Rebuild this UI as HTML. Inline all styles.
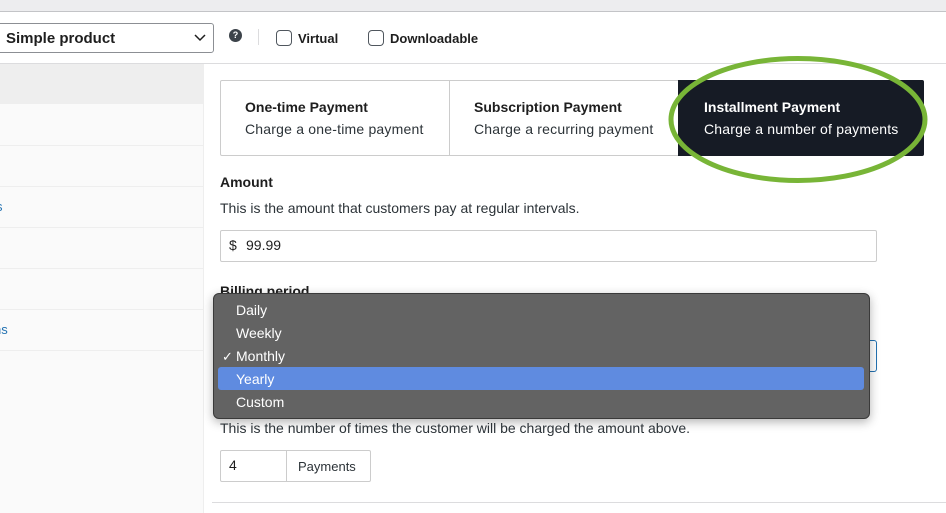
<!DOCTYPE html>
<html><head><style>
*{box-sizing:border-box;margin:0;padding:0}
body{width:946px;height:513px;overflow:hidden;background:#fff;font-family:"Liberation Sans",sans-serif;color:#1e1e1e;position:relative}
.a{position:absolute}
.t{font-size:14px;color:#2c3338}
</style></head><body>
<div class="a" style="left:0;top:0;width:946px;height:12px;background:#ededef;border-bottom:1px solid #c3c4c7"></div>
<div class="a" style="left:0;top:63px;width:946px;height:1px;background:#dcdcde"></div>
<div class="a" style="left:-4px;top:23px;width:218px;height:30px;border:1px solid #8c8f94;border-radius:3px"></div>
<div class="a" style="left:6px;top:30px;font-size:15px;font-weight:bold;color:#1e1e1e">Simple product</div>
<svg class="a" style="left:194px;top:33px" width="12" height="10"><path d="M1 2 L6 7 L11 2" stroke="#1e1e1e" stroke-width="1.5" fill="none"/></svg>
<div class="a" style="left:229px;top:29px;width:13px;height:13px;border-radius:50%;background:#3c434a;color:#fff;font-size:9px;font-weight:bold;text-align:center;line-height:13px">?</div>
<div class="a" style="left:258px;top:29px;width:1px;height:16px;background:#dcdcde"></div>
<div class="a" style="left:276px;top:30px;width:16px;height:16px;border:1px solid #50575e;border-radius:4px"></div>
<div class="a" style="left:298px;top:31px;font-size:13px;font-weight:bold;color:#1e1e1e">Virtual</div>
<div class="a" style="left:368px;top:30px;width:16px;height:16px;border:1px solid #50575e;border-radius:4px"></div>
<div class="a" style="left:390px;top:31px;font-size:13px;font-weight:bold;color:#1e1e1e">Downloadable</div>
<div class="a" style="left:0;top:64px;width:204px;height:449px;background:#fafafa;border-right:1px solid #eee"></div>
<div class="a" style="left:0;top:64px;width:204px;height:40px;background:#eeeeee"></div>
<div class="a" style="left:0;top:145px;width:204px;height:1px;background:#eee"></div>
<div class="a" style="left:0;top:186px;width:204px;height:1px;background:#eee"></div>
<div class="a" style="left:0;top:227px;width:204px;height:1px;background:#eee"></div>
<div class="a" style="left:0;top:268px;width:204px;height:1px;background:#eee"></div>
<div class="a" style="left:0;top:309px;width:204px;height:1px;background:#eee"></div>
<div class="a" style="left:0;top:350px;width:204px;height:1px;background:#eee"></div>
<div class="a" style="left:-4px;top:199px;font-size:13px;color:#2271b1">s</div>
<div class="a" style="left:-6px;top:322px;font-size:13px;color:#2271b1">ns</div>
<div class="a" style="left:220px;top:80px;width:704px;height:76px;border:1px solid #ccc;border-radius:2px"></div>
<div class="a" style="left:449px;top:80px;width:1px;height:76px;background:#ccc"></div>
<div class="a" style="left:678px;top:80px;width:246px;height:76px;background:#161b25;border-radius:0 2px 2px 0"></div>
<div class="a" style="left:245px;top:99px;font-size:14px;font-weight:bold;color:#1e1e1e">One-time Payment</div>
<div class="a t" style="left:245px;top:121px;letter-spacing:0.2px">Charge a one-time payment</div>
<div class="a" style="left:474px;top:99px;font-size:14px;font-weight:bold;color:#1e1e1e">Subscription Payment</div>
<div class="a t" style="left:474px;top:121px;letter-spacing:0.2px">Charge a recurring payment</div>
<div class="a" style="left:704px;top:99px;font-size:14px;font-weight:bold;color:#fff">Installment Payment</div>
<div class="a" style="left:704px;top:121px;font-size:14px;color:#fff;letter-spacing:0.2px">Charge a number of payments</div>
<svg class="a" style="left:0;top:0" width="946" height="513"><ellipse cx="798" cy="119.5" rx="127" ry="61" fill="none" stroke="#78b537" stroke-width="5"/></svg>
<div class="a" style="left:220px;top:174px;font-size:14px;font-weight:bold;color:#1e1e1e">Amount</div>
<div class="a t" style="left:220px;top:200px">This is the amount that customers pay at regular intervals.</div>
<div class="a" style="left:220px;top:230px;width:657px;height:32px;border:1px solid #ccc;border-radius:2px"></div>
<div class="a" style="left:229px;top:237px;font-size:14px;color:#1e1e1e">$</div>
<div class="a" style="left:246px;top:237px;font-size:14px;color:#1e1e1e">99.99</div>
<div class="a" style="left:220px;top:283px;font-size:14px;font-weight:bold;color:#1e1e1e">Billing period</div>
<div class="a" style="left:820px;top:340px;width:57px;height:32px;border:1px solid #2271b1;border-left:none;border-radius:0 3px 3px 0"></div>
<div class="a" style="left:213px;top:293px;width:657px;height:126px;background:#636363;border:1px solid #3a3a3a;border-radius:6px;box-shadow:0 3px 10px rgba(0,0,0,.3)"></div>
<div class="a" style="left:218px;top:367px;width:646px;height:23px;background:#5f8be0;border-radius:3px"></div>
<div class="a" style="left:236px;top:299px;font-size:14px;color:#fff;line-height:23px">Daily<br>Weekly<br>Monthly<br>Yearly<br>Custom</div>
<div class="a" style="left:222px;top:345px;font-size:13px;color:#fff;line-height:23px">✓</div>
<div class="a t" style="left:220px;top:420px">This is the number of times the customer will be charged the amount above.</div>
<div class="a" style="left:220px;top:450px;width:151px;height:32px;border:1px solid #ccc;border-radius:2px"></div>
<div class="a" style="left:286px;top:450px;width:1px;height:32px;background:#ccc"></div>
<div class="a" style="left:229px;top:457px;font-size:14px;color:#1e1e1e">4</div>
<div class="a" style="left:298px;top:459px;font-size:13px;color:#2c3338">Payments</div>
<div class="a" style="left:212px;top:502px;width:734px;height:1px;background:#dcdcde"></div>
</body></html>
